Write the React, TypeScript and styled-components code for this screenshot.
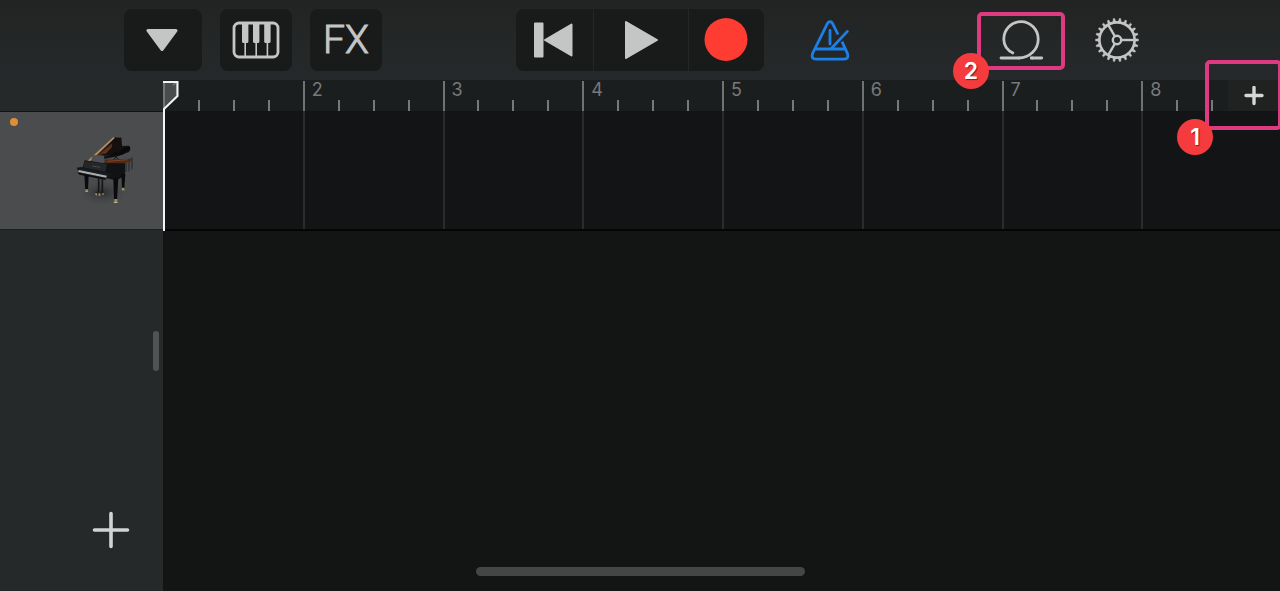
import React from "react";
import styled, { createGlobalStyle } from "styled-components";

const GlobalStyle = createGlobalStyle`
  *, *::before, *::after { box-sizing: border-box; }
  body {
    margin: 0;
    background: #131514;
    font-family: Inter, "Liberation Sans", sans-serif;
  }
  button {
    margin: 0;
    padding: 0;
    border: 0;
    background: none;
    color: inherit;
    font-family: inherit;
    cursor: pointer;
  }
  svg { display: block; }
`;

const icon = "#c4c5c5";

const Screen = styled.div`
  position: relative;
  min-height: 100vh;
  display: flex;
  flex-direction: column;
  overflow: hidden;
`;

const Toolbar = styled.header`
  display: grid;
  grid-template-columns: 1fr auto 1fr;
  align-items: center;
  height: 80px;
  background: linear-gradient(#222423, #26292b);
`;

const ToolGroup = styled.div`
  display: flex;
  gap: 18px;
  padding-left: 124px;
`;

const ToolButton = styled.button<{ $wide?: boolean }>`
  display: flex;
  align-items: center;
  justify-content: center;
  width: ${(p) => (p.$wide ? 78 : 72)}px;
  height: 62px;
  border-radius: 8px;
  background: #191a1a;
  color: ${icon};
  font-family: Roboto, Inter, sans-serif;
  font-size: 39px;
  line-height: 48px;
  font-weight: 300;
  -webkit-text-stroke: 1px ${icon};
`;

const Transport = styled.div`
  display: flex;
  border-radius: 8px;
  overflow: hidden;
  background: #191a1a;
`;

const TransportButton = styled.button<{ $width: number }>`
  display: flex;
  align-items: center;
  justify-content: center;
  width: ${(p) => p.$width}px;
  height: 62px;
  & + & { border-left: 1px solid #252727; }
`;

const Settings = styled.div`
  display: flex;
  align-items: center;
  padding: 0 141px 0 44px;
`;

const IconButton = styled.button`
  display: flex;
`;

const LoopButton = styled.button`
  position: relative;
  display: flex;
  align-items: center;
  justify-content: center;
  width: 88px;
  height: 58px;
  margin: 0 30px 0 auto;
`;

const Callout = styled.span<{ $inset: string }>`
  position: absolute;
  z-index: 3;
  inset: ${(p) => p.$inset};
  border: 4px solid #dd3a82;
  border-radius: 5px;
  pointer-events: none;
`;

const Badge = styled.span<{ $left: number; $bottom: number }>`
  position: absolute;
  left: ${(p) => p.$left}px;
  bottom: ${(p) => p.$bottom}px;
  display: flex;
  align-items: center;
  justify-content: center;
  width: 36px;
  height: 36px;
  border-radius: 50%;
  background: #f63b3e;
  color: #fff;
  font: 600 23px/36px Inter, sans-serif;
  text-shadow: 1px 1px 1px rgba(70, 0, 0, 0.6);
`;

const Workspace = styled.main`
  flex: 1;
  display: grid;
  grid-template-columns: 163px minmax(0, 1fr);
`;

const Sidebar = styled.aside`
  display: flex;
  flex-direction: column;
  background: #25292a;
`;

const SidebarTop = styled.div`
  height: 31px;
`;

const TrackList = styled.div`
  position: relative;
  flex: 1;
  display: flex;
  flex-direction: column;
`;

const TrackHeader = styled.div`
  display: flex;
  justify-content: space-between;
  align-items: center;
  height: 119px;
  padding: 0 14px 2px 10px;
  border-top: 1px solid #111212;
  border-bottom: 1px solid #1c1f20;
  background: #4b4c4e;
`;

const Led = styled.span`
  align-self: flex-start;
  width: 8px;
  height: 8px;
  margin-top: 6px;
  border-radius: 50%;
  background: #dc8f34;
`;

const ResizeHandle = styled.div`
  position: absolute;
  right: 4px;
  top: calc(50% - 20px);
  width: 6px;
  height: 40px;
  border-radius: 3px;
  background: #505354;
`;

const AddTrack = styled.button`
  display: flex;
  align-self: flex-end;
  margin: auto 30px 39px 0;
`;

const Timeline = styled.section`
  position: relative;
  display: flex;
  flex-direction: column;
  background: #131514;
`;

const Bars = styled.div`
  display: grid;
  grid-template-columns: repeat(8, 1fr);
  width: calc(100% + 1px);
  height: 100%;
`;

const Ruler = styled.div`
  height: 31px;
  overflow: hidden;
  background: #1b1e1e;
`;

const RulerBar = styled.div`
  position: relative;
  display: grid;
  grid-template-columns: repeat(4, 1fr);
  align-items: end;
  height: 31px;
`;

const Beat = styled.span<{ $major: boolean }>`
  height: ${(p) => (p.$major ? 30 : 11)}px;
  border-left: 2px solid ${(p) => (p.$major ? "#707273" : "#77797a")};
`;

const BarNumber = styled.span`
  position: absolute;
  left: 9px;
  top: 0;
  color: #77797a;
  font-size: 18px;
  line-height: 20px;
  font-weight: 400;
`;

const Lane = styled.div`
  height: 120px;
  overflow: hidden;
  background: #131416;
  border-bottom: 2px solid #040505;
`;

const LaneBar = styled.div`
  border-left: 2px solid #292b2d;
  &:first-child { border-color: transparent; }
`;

const Playhead = styled.svg`
  position: absolute;
  left: 0;
  top: 0;
  z-index: 1;
`;

const SectionCorner = styled.div`
  position: absolute;
  right: 0;
  top: 0;
  width: 52px;
  height: 31px;
  background: #202222;
`;

const SectionButton = styled.button`
  display: flex;
  align-items: center;
  justify-content: center;
  width: 100%;
  height: 31px;
`;

const HomeIndicator = styled.div`
  position: absolute;
  bottom: 15px;
  left: 0;
  right: 0;
  width: 329px;
  height: 9px;
  margin: 0 auto;
  border-radius: 5px;
  background: #444645;
`;

const KeyboardIcon = () => (
  <svg width="48" height="38" viewBox="0 0 48 38" fill="none">
    <rect x="2" y="2" width="44" height="34" rx="5" stroke={icon} strokeWidth="2.8" />
    <path d="M13.2 20v15M24.2 20v15M35.4 20v15" stroke={icon} strokeWidth="1.6" />
    <path
      d="M10 2h6.4v18.5q0 1.5-1.5 1.5h-3.4q-1.5 0-1.5-1.5zM21 2h6.4v18.5q0 1.5-1.5 1.5h-3.4q-1.5 0-1.5-1.5zM32.2 2h6.4v18.5q0 1.5-1.5 1.5h-3.4q-1.5 0-1.5-1.5z"
      fill={icon}
    />
  </svg>
);

const MetronomeIcon = () => (
  <svg width="44" height="44" viewBox="1 0 44 44" fill="none" stroke="#1b80e8" strokeWidth="2.8" strokeLinecap="round" strokeLinejoin="round">
    <path strokeLinecap="butt" d="M31 16.5 26.4 7.2Q25 3.7 23 3.7t-3.4 3.5L5.6 35.4Q3.6 41.2 9.2 41.2h27.6q5.6 0 3.6-5.8L35 23.6" />
    <path d="M9 31h28M23 12.5v13.5M40.4 13.4 23.8 31" />
  </svg>
);

const LoopIcon = () => (
  <svg width="46" height="44" viewBox="0 0 46 44" fill="none" stroke={icon} strokeWidth="2.8" strokeLinecap="round">
    <path d="M34 40H43.700M3 40H21" />
    <path strokeLinecap="butt" d="M15.800 35.600C9.500 32.500 5.800 27.500 5.800 21.200A17.200 17.600 0 0 1 40.200 21.200C40.200 31 32 40 20.500 40" />
    <path strokeLinecap="butt" d="M32 40h3" />
  </svg>
);

const teeth = Array.from({ length: 22 }, (_, i) => (i * 360) / 22);

const GearIcon = () => (
  <svg width="44" height="44" viewBox="-22 -22 44 44" fill="none" stroke={icon}>
    <circle r="17.600" strokeWidth="2.600" />
    <circle r="4.200" strokeWidth="2.400" />
    {teeth.map((a) => (
      <path key={a} d="M18-1.400 21.600-.800V.800L18 1.400z" fill={icon} strokeWidth=".4" transform={`rotate(${a})`} />
    ))}
    {[0, 120, 240].map((a) => (
      <path key={a} d="M4.500 0H17.500" strokeWidth="2.400" transform={`rotate(${a})`} />
    ))}
  </svg>
);

const PianoIcon = () => (
  <svg width="90" height="100" viewBox="0 0 270 300" role="img" aria-label="Grand piano">
    <defs>
      <radialGradient id="floor">
        <stop offset="0" stopColor="#2b2c2d" />
        <stop offset="1" stopColor="#4b4c4e" stopOpacity="0" />
      </radialGradient>
      <linearGradient id="lid" x1="0" y1="1" x2="1" y2="0">
        <stop offset="0" stopColor="#7c5335" />
        <stop offset=".4" stopColor="#3b2114" />
        <stop offset="1" stopColor="#110d0b" />
      </linearGradient>
    </defs>
    <ellipse cx="130" cy="218" rx="80" ry="42" fill="url(#floor)" />
    <path d="M201 116v40M210 116v38M219 112v36" stroke="#242526" strokeWidth="3" />
    <path d="M162 52 186 53 189 78 210 77Q218 85 210 96L178 108 92 126z" fill="#111213" />
    <path d="M88 124 164 52 174 55 158 104 128 112z" fill="url(#lid)" />
    <path d="M86 122 163 51 168 53 95 122z" fill="#b58c60" />
    <path d="M168 55 187 53 188 78 204 78 150 106 128 106z" fill="#15100e" />
    <path d="M124 101 160 70 158 82 140 101z" fill="#5b331f" />
    <path d="M158 102 210 79 214 87 190 104 150 110z" fill="#08090a" />
    <path d="M132 119 219 116 218 124 198 128 198 137 134 132z" fill="#4f2817" />
    <path d="M145 124 205 119" stroke="#7d4529" strokeWidth="3" />
    <path d="M160 101 179 118M186 84 165 119" stroke="#151617" strokeWidth="3" />
    <path d="M101 105 135 107 137 128 96 124z" fill="#4d5157" />
    <path d="M77 121 134 130 198 130 198 166 181 177 163 179 67 157z" fill="#101214" />
    <path d="M77 123 144 133 139 157 72 148z" fill="#23272a" />
    <path d="M101 138l24 4" stroke="#777264" strokeWidth="2" strokeDasharray="4 2" />
    <path d="M53 143 67 141 154 158 156 174 60 158z" fill="#15171a" />
    <path d="M60 150 144 167 141 173 57 156z" fill="#a9acae" />
    <path d="M66 148 145 164" stroke="#202224" strokeWidth="4" strokeDasharray="3 2" />
    <path d="M55 157 140 174 140 180 61 164z" fill="#0c0e0f" />
    <path d="M76 165h13l-2 46h-8zM163 175h15l-4 63h-9zM187 162h12l-3 43h-7z" fill="#090b0c" />
    <path d="M119 175v44M130 177v43" stroke="#141618" strokeWidth="5" />
    <path d="M109 217 135 221" stroke="#252522" strokeWidth="5" />
    <path d="M79 208h8v7h-8zM166 237h9v9h-9zM189 203h7v7h-7zM109 219l5 1v7l-5-2zM119 220h5v8h-5zM130 219h4v6h-4z" fill="#998a60" />
    <path d="M77 216q6-5 12 0zM162 249q8-7 16 0zM187 211q6-5 11 0z" fill="#b8af93" />
  </svg>
);

const barNumbers = [1, 2, 3, 4, 5, 6, 7, 8];
const beats = [0, 1, 2, 3];

export default function App() {
  return (
    <Screen>
      <GlobalStyle />
      <Toolbar>
        <ToolGroup>
          <ToolButton $wide aria-label="Navigation menu">
            <svg width="34" height="24" viewBox="1 0 34 24">
              <path d="M3 2.500h28L17 21.500z" fill={icon} stroke={icon} strokeWidth="3" strokeLinejoin="round" />
            </svg>
          </ToolButton>
          <ToolButton aria-label="Keyboard"><KeyboardIcon /></ToolButton>
          <ToolButton>FX</ToolButton>
        </ToolGroup>
        <Transport>
          <TransportButton $width={77} aria-label="Go to beginning">
            <svg width="44" height="36" viewBox="0 0 44 36" fill={icon} stroke={icon} strokeWidth="2" strokeLinejoin="round">
              <path d="M2 1.500h7.500v33H2zM12 18 38.500 2.500v31z" />
            </svg>
          </TransportButton>
          <TransportButton $width={95} aria-label="Play">
            <svg width="36" height="40" viewBox="0 0 36 40">
              <path d="M3 2 34 20 3 38z" fill={icon} stroke={icon} strokeWidth="2" strokeLinejoin="round" />
            </svg>
          </TransportButton>
          <TransportButton $width={76} aria-label="Record">
            <svg width="46" height="44" viewBox="0 0 46 44">
              <circle cx="22" cy="21.500" r="21.500" fill="#fe3c32" />
            </svg>
          </TransportButton>
        </Transport>
        <Settings>
          <IconButton aria-label="Metronome"><MetronomeIcon /></IconButton>
          <LoopButton aria-label="Loop browser">
            <LoopIcon />
            <Callout $inset="1px 0 -1px">
              <Badge $left={-28} $bottom={-23}>2</Badge>
            </Callout>
          </LoopButton>
          <IconButton aria-label="Settings"><GearIcon /></IconButton>
        </Settings>
      </Toolbar>
      <Workspace>
        <Sidebar>
          <SidebarTop />
          <TrackList>
            <TrackHeader>
              <Led />
              <PianoIcon />
            </TrackHeader>
            <ResizeHandle />
            <AddTrack aria-label="Add track">
              <svg width="44" height="44" viewBox="0 0 44 44">
                <path d="M22 5.500v33M5.500 22h33" stroke="#d2d3d3" strokeWidth="3.600" strokeLinecap="round" />
              </svg>
            </AddTrack>
          </TrackList>
        </Sidebar>
        <Timeline>
          <Ruler>
            <Bars>
              {barNumbers.map((n) => (
                <RulerBar key={n}>
                  {beats.map((b) => (
                    <Beat key={b} $major={b === 0} />
                  ))}
                  <BarNumber>{n}</BarNumber>
                </RulerBar>
              ))}
            </Bars>
          </Ruler>
          <Lane>
            <Bars>
              {barNumbers.map((n) => (
                <LaneBar key={n} />
              ))}
            </Bars>
          </Lane>
          <Playhead width="18" height="152" viewBox="0 0 18 152" fill="none">
            <path d="M0 2h15v14L1 28z" fill="#77797c" fillOpacity=".5" />
            <path d="M0 2h14.500v14L1 29V151" stroke="#f4f4f4" strokeWidth="2" />
          </Playhead>
          <SectionCorner>
            <SectionButton aria-label="Add section">
              <svg width="20" height="20" viewBox="0 0 20 20">
                <path d="M10 1.500v16M2 9.500h16" stroke="#d5d6d6" strokeWidth="3.400" strokeLinecap="round" />
              </svg>
            </SectionButton>
            <Callout $inset="-20px -2px -19px -23px">
              <Badge $left={-32} $bottom={-29}>1</Badge>
            </Callout>
          </SectionCorner>
        </Timeline>
      </Workspace>
      <HomeIndicator />
    </Screen>
  );
}
